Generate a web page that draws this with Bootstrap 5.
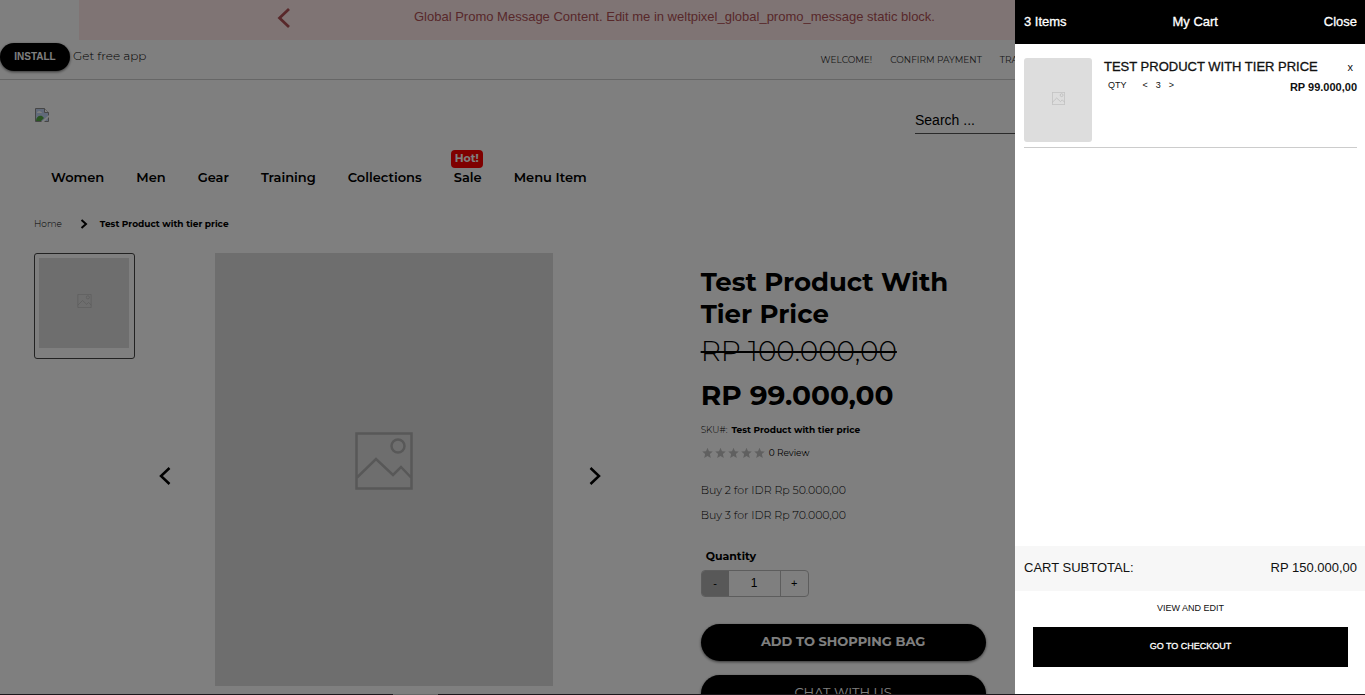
<!DOCTYPE html>
<html lang="en">
<head>
<meta charset="utf-8">
<meta name="viewport" content="width=device-width, initial-scale=1">
<title>Test Product with tier price</title>
<link href="https://cdn.jsdelivr.net/npm/bootstrap@5.3.0/dist/css/bootstrap.min.css" rel="stylesheet">
<style>
  :root { --shop: Montserrat, Inter, sans-serif; --plain: "Liberation Sans", Arial, sans-serif; }
  body { font-family: var(--shop); font-size: 11px; line-height: 16px; color: #000; height: 100vh; overflow: hidden; }
  a { color: inherit; text-decoration: none; }
  button, input { color: inherit; }
  .store { padding-right: 15px; }
  .promo { height: 40px; margin: 0 80px 0 79px; padding: 0 198px; background: #ffe8e8; color: #b05055; font: 13px/34px var(--plain); }
  .topbar { height: 40px; border-bottom: 1px solid #ccc; }
  .app-offer { padding-bottom: 6px; gap: 3px; }
  .install { height: 28px; width: 70px; background: #000; color: #fff; font: bold 10px/28px var(--plain); box-shadow: 0 1px 3px rgba(0,0,0,.6); }
  .free-app { font-size: 12px; font-weight: 300; color: #000; padding-top: 5px; }
  .top-links { font-size: 9px; font-weight: 400; color: #333; gap: 18px; padding-right: 283px; }
  .masthead { padding: 27px 34px 0; }
  .search { width: 401px; height: 27px; border: 0; border-bottom: 1px solid #555; background: none; font: 14px/20px var(--plain); padding: 0; }
  .search::placeholder { color: #000; opacity: 1; }
  .main-nav { gap: 32px; padding: 35px 51px 0; font-size: 13px; font-weight: 600; }
  .hot { background: #f00; font: bold 11px/17px var(--shop); padding: 0 4px 1px; border-radius: 4px; bottom: 17px; left: -3px; }
  .crumbs { padding: 31px 34px 0; font-size: 9px; gap: 18px; }
  .product { padding: 21px 34px 0; }
  .gallery { width: 52%; }
  .thumb { width: 101px; height: 106px; padding: 4px; border: 1px solid #444; border-radius: 3px; background: none; }
  .thumb .blank { width: 90px; height: 90px; padding-bottom: 4px; }
  .blank { background: #ddd; color: #b0b0b0; }
  .stage { padding-left: 23px; height: 433px; gap: 35px; }
  .stage .blank { width: 338px; height: 433px; padding-bottom: 18px; }
  .stage .arrow { margin-top: 12px; }
  .info { width: 285px; padding-top: 13px; }
  .info h1 { font-size: 26px; line-height: 32px; font-weight: 700; margin: 0; }
  .old-price { font-size: 28px; line-height: 42px; font-weight: 300; }
  .price { font-size: 28px; line-height: 46px; font-weight: 700; }
  .sku { font-size: 9px; line-height: 20px; gap: 4px; padding-top: 2px; }
  .rating { font-size: 9px; line-height: 26px; gap: 3px; }
  .stars { color: #c0c0c0; }
  .tiers { font-size: 11px; line-height: 25px; font-weight: 300; padding-top: 12px; }
  .qty-label { font-size: 11px; line-height: 16px; font-weight: 700; margin: 20px 0 6px 5px; }
  .qty { width: 108px; height: 27px; border: 1px solid #bbb; border-radius: 4px; overflow: hidden; margin-bottom: 27px; }
  .qty button { width: 27px; border: 0; background: none; padding: 0; font: 11px/25px var(--plain); }
  .qty button:disabled { background: #b0b0b0; color: #000; }
  .qty input { min-width: 0; flex: 1; border: 0; border-right: 1px solid #bbb; background: none; padding: 0; font: 12px/25px var(--plain); }
  .buy { gap: 14px; }
  .pill { height: 37px; background: #000; color: #fff; border: 0; padding: 0 0 4px; border-radius: 20px; font: 700 13px/32px var(--shop); box-shadow: 0 1px 3px rgba(0,0,0,.6); }
  .pill-light { font-weight: 400; }
  .cart { --bs-offcanvas-width: 350px; border: 0 !important; font-family: var(--plain); color: #111; }
  .cart-head { height: 44px; background: #000; color: #fff; padding: 0 8px 0 9px; font: 13px/20px var(--plain); -webkit-text-stroke: .3px; }
  .cart-head h2 { font: inherit; margin: 0; }
  .cart-head button, .cart-item button { border: 0; background: none; padding: 0; font: inherit; }
  .cart-item { margin: 14px 8px 0 9px; padding-bottom: 5px; border-bottom: 1px solid #ccc; gap: 12px; }
  .cart-item .blank { width: 68px; height: 84px; border-radius: 3px; padding-bottom: 4px; }
  .cart-name { font-size: 13px; line-height: 17px; -webkit-text-stroke: .3px; }
  .cart-line { font-size: 9px; line-height: 20px; }
  .cart-price { font-size: 11px; font-weight: 700; line-height: 24px; }
  .subtotal { height: 45px; background: #f7f7f7; padding: 0 8px 2px 9px; font-size: 13px; }
  .cart-actions { padding: 9px 17px 28px 18px; font-size: 9px; }
  .checkout { height: 40px; background: #000; color: #fff; border: 0; font: 9px/36px var(--plain); padding: 0 0 3px; margin-top: 11px; -webkit-text-stroke: .3px; }
  .edge { height: 1px; background: #1c171b; z-index: 1100; padding-left: 393px; }
  .edge span { width: 45px; height: 1px; background: #666; }
</style>
</head>
<body>
<svg class="d-none">
  <symbol id="left" viewBox="0 0 12 18"><path d="M10.500 1 2 9l8.500 8" fill="none" stroke="currentColor" stroke-width="2.500"/></symbol>
  <symbol id="right" viewBox="0 0 12 18"><path d="M1.500 1 10 9l-8.500 8" fill="none" stroke="currentColor" stroke-width="2.500"/></symbol>
  <symbol id="next-crumb" viewBox="0 0 8 10"><path d="M1.500 1 6 5 1.500 9" fill="none" stroke="currentColor" stroke-width="2"/></symbol>
  <symbol id="photo" viewBox="0 0 58 58"><g fill="none" stroke="currentColor" stroke-width="2.500"><path d="M1.500 1.500h55v55h-55zM1.500 46 21 27l17 16 8-8 10.500 11"/><circle cx="43" cy="14" r="6.500"/></g></symbol>
  <symbol id="star" viewBox="0 0 12 12"><path fill="currentColor" d="M6 .8 7.500 4.300l3.800.3-2.900 2.500.9 3.800L6 8.900l-3.300 2 .9-3.800L.7 4.600l3.800-.3z"/></symbol>
</svg>

<div class="store">
  <div class="promo d-flex justify-content-between">
    <a href="#" class="d-flex pt-2" aria-label="Previous message"><svg width="14" height="20"><use href="#left"/></svg></a>
    <span class="text-nowrap">Global Promo Message Content. Edit me in weltpixel_global_promo_message static block.</span>
    <a href="#" class="d-flex pt-2" aria-label="Next message"><svg width="14" height="20"><use href="#right"/></svg></a>
  </div>

  <div class="topbar d-flex justify-content-between align-items-center">
    <div class="app-offer d-flex align-items-start">
      <button class="install btn rounded-pill border-0 p-0" type="button">INSTALL</button>
      <span class="free-app">Get free app</span>
    </div>
    <nav class="top-links d-flex"><a href="#">WELCOME!</a><a href="#">CONFIRM PAYMENT</a><a href="#">TRACK ORDER</a></nav>
  </div>

  <header class="masthead d-flex justify-content-between align-items-start">
    <a href="#" aria-label="Store home" class="d-flex">
      <svg width="16" height="16" viewBox="0 0 16 16"><path d="M1.500 1.500h9l4 4v9h-13z" fill="#c3d5f5" stroke="#8c8c8c"/><path d="M10.500 1.500v4h4" fill="#fff" stroke="#8c8c8c"/><path d="M2 14c0-4 3-6 6-5l2 2-3 3z" fill="#55a844"/><path d="M3 6c0-2 3-3 4-1 1 0 1 1 1 1z" fill="#fff"/><path d="m7 15 8-7v2l-5 5z" fill="#fff"/></svg>
    </a>
    <input class="search" type="search" placeholder="Search ..." aria-label="Search">
  </header>

  <nav class="main-nav d-flex">
    <a href="#">Women</a><a href="#">Men</a><a href="#">Gear</a><a href="#">Training</a><a href="#">Collections</a>
    <a href="#" class="position-relative">Sale<span class="hot position-absolute text-white">Hot!</span></a>
    <a href="#">Menu Item</a>
  </nav>

  <nav class="crumbs d-flex align-items-center" aria-label="Breadcrumb">
    <a href="#" class="fw-light">Home</a>
    <span class="d-flex align-items-center gap-2"><svg width="8" height="10" class="me-1"><use href="#next-crumb"/></svg><span class="fw-bold">Test Product with tier price</span></span>
  </nav>

  <main class="product d-flex align-items-start">
    <section class="gallery d-flex align-items-start">
      <button type="button" class="thumb d-flex align-items-start flex-shrink-0" aria-label="Product image 1"><span class="blank d-flex align-items-center justify-content-center"><svg width="15" height="14"><use href="#photo"/></svg></span></button>
      <div class="stage d-flex align-items-center">
        <a href="#" class="arrow me-2" aria-label="Previous image"><svg width="14" height="18"><use href="#left"/></svg></a>
        <div class="blank d-flex align-items-center justify-content-center"><svg width="58" height="58"><use href="#photo"/></svg></div>
        <a href="#" class="arrow" aria-label="Next image"><svg width="14" height="18"><use href="#right"/></svg></a>
      </div>
    </section>

    <section class="info">
      <h1>Test Product With Tier Price</h1>
      <div class="old-price"><s>RP 100.000,00</s></div>
      <div class="price">RP 99.000,00</div>
      <div class="sku d-flex"><span class="fw-light">SKU#:</span><span class="fw-bold">Test Product with tier price</span></div>
      <div class="rating d-flex align-items-center">
        <span class="stars d-flex"><svg width="13" height="12"><use href="#star"/></svg><svg width="13" height="12"><use href="#star"/></svg><svg width="13" height="12"><use href="#star"/></svg><svg width="13" height="12"><use href="#star"/></svg><svg width="13" height="12"><use href="#star"/></svg></span>
        <a href="#">0 Review</a>
      </div>
      <div class="tiers"><div>Buy 2 for IDR Rp 50.000,00</div><div>Buy 3 for IDR Rp 70.000,00</div></div>
      <label class="qty-label d-block" for="qty">Quantity</label>
      <div class="qty d-flex">
        <button type="button" disabled aria-label="Decrease">-</button>
        <input id="qty" class="text-center" type="text" value="1">
        <button type="button" aria-label="Increase">+</button>
      </div>
      <div class="buy d-grid">
        <button type="button" class="pill">ADD TO SHOPPING BAG</button>
        <button type="button" class="pill pill-light">CHAT WITH US</button>
      </div>
    </section>
  </main>
</div>

<div class="offcanvas-backdrop show"></div>
<aside class="cart offcanvas offcanvas-end show" data-bs-backdrop="false" aria-labelledby="cart-title">
  <div class="cart-head d-flex align-items-center justify-content-between">
    <span>3 Items</span><h2 id="cart-title">My Cart</h2><button type="button" class="text-white">Close</button>
  </div>
  <div class="cart-item d-flex">
    <div class="blank d-flex align-items-center justify-content-center"><svg width="13" height="13"><use href="#photo"/></svg></div>
    <div class="flex-grow-1">
      <div class="d-flex justify-content-between"><a href="#" class="cart-name">TEST PRODUCT WITH TIER PRICE</a><button type="button" class="pe-1" aria-label="Remove">x</button></div>
      <div class="d-flex justify-content-between align-items-start">
        <div class="cart-line d-flex align-items-center ps-1"><span class="me-3">QTY</span><button type="button" class="me-2">&lt;</button><span class="me-2">3</span><button type="button">&gt;</button></div>
        <span class="cart-price">RP 99.000,00</span>
      </div>
    </div>
  </div>
  <div class="subtotal d-flex align-items-center justify-content-between mt-auto"><span>CART SUBTOTAL:</span><span>RP 150.000,00</span></div>
  <div class="cart-actions d-grid text-center"><a href="#">VIEW AND EDIT</a><button type="button" class="checkout">GO TO CHECKOUT</button></div>
</aside>
<div class="edge fixed-bottom d-flex"><span></span></div>
<script src="https://cdn.jsdelivr.net/npm/bootstrap@5.3.0/dist/js/bootstrap.bundle.min.js"></script>
</body>
</html>
